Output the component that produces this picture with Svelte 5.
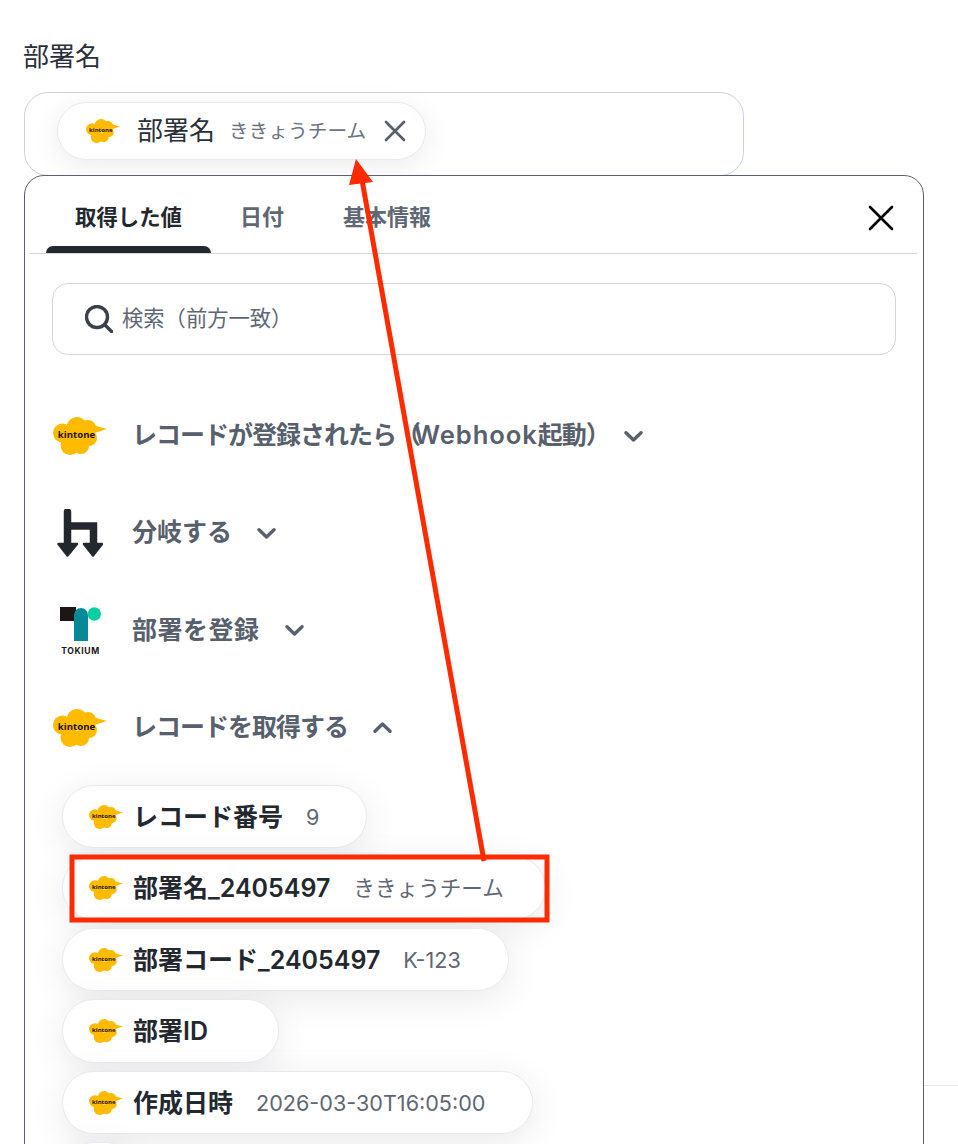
<script>
  const chips = [
    { name: 'レコード番号', value: '9', tight: false },
    { name: '部署名_2405497', value: 'ききょうチーム', tight: true },
    { name: '部署コード_2405497', value: 'K-123', tight: false },
    { name: '部署ID', value: '', tight: false },
    { name: '作成日時', value: '2026-03-30T16:05:00', tight: false },
    { name: '', value: '', tight: false }
  ];
</script>

{#snippet kintone(cls)}
  <svg class={cls} viewBox="0 0 54 38" aria-hidden="true">
    <g fill="#ffbb00">
      <circle cx="9.5" cy="16" r="9.5" />
      <circle cx="24" cy="10.5" r="10.5" />
      <circle cx="35" cy="11" r="8" />
      <circle cx="36" cy="21" r="8" />
      <circle cx="28" cy="29" r="8" />
      <circle cx="17" cy="28.5" r="9.5" />
      <path d="M38 7.5 L54 12 L40 16.5 Z" />
    </g>
    <text x="23.5" y="21" text-anchor="middle" class="ktext">kintone</text>
  </svg>
{/snippet}

{#snippet chevron(up)}
  <svg class="chev" viewBox="0 0 19 11" aria-hidden="true">
    {#if up}
      <path d="M2 9.2 L9.5 2 L17 9.2" />
    {:else}
      <path d="M2 1.8 L9.5 9 L17 1.8" />
    {/if}
  </svg>
{/snippet}

<div class="page">
  <div class="label">部署名</div>
  <div class="input">
    <div class="token">
      {@render kintone('logo-sm')}
      <span class="token-name">部署名</span>
      <span class="token-value">ききょうチーム</span>
      <svg class="token-x" viewBox="0 0 22 22" aria-hidden="true">
        <path d="M2 2 L20 20 M20 2 L2 20" />
      </svg>
    </div>
  </div>

  <div class="panel">
    <div class="tabbar">
      <div class="tab active">取得した値</div>
      <div class="tab">日付</div>
      <div class="tab third">基本情報</div>
      <svg class="close" viewBox="0 0 26 26" aria-hidden="true">
        <path d="M2 2 L24 24 M24 2 L2 24" />
      </svg>
    </div>

    <div class="body">
      <div class="search">
        <svg class="search-icon" viewBox="0 0 28 28" aria-hidden="true">
          <circle cx="12" cy="12" r="10.5" />
          <path d="M20 20 L26.5 26.5" />
        </svg>
        <span class="search-text">検索（前方一致）</span>
      </div>

      <div class="groups">
        <div class="group">
          <div class="slot">{@render kintone('logo-lg')}</div>
          <span class="group-name kana">レコードが登録されたら<span class="open">（</span><span class="latin">Webhook</span>起動<span class="close-paren">）</span></span>
          {@render chevron(false)}
        </div>
        <div class="group">
          <div class="slot">
            <svg class="branch" viewBox="0 0 46 48" aria-hidden="true">
              <path d="M10.5 34 V3 M10.5 17 H36.5 V34" />
              <path class="head" d="M1.5 35 H20 L10.5 46.5 Z M27 35 H45 L36 46.5 Z" />
            </svg>
          </div>
          <span class="group-name">分岐する</span>
          {@render chevron(false)}
        </div>
        <div class="group">
          <div class="slot">
            <svg class="tokium" viewBox="0 0 41 47" aria-hidden="true">
              <rect x="0" y="0" width="16" height="14" fill="#1c1716" />
              <path d="M14 34 V8 A7 7 0 0 1 28 8 V34 Z" fill="#078a96" />
              <circle cx="34.3" cy="7" r="6.7" fill="#07cfa0" />
              <text x="20.5" y="46.5" text-anchor="middle" class="ttext">TOKIUM</text>
            </svg>
          </div>
          <span class="group-name wide">部署を登録</span>
          {@render chevron(false)}
        </div>
        <div class="group">
          <div class="slot">{@render kintone('logo-lg')}</div>
          <span class="group-name kana">レコードを取得する</span>
          {@render chevron(true)}
        </div>
      </div>

      <div class="chips">
        {#each chips as chip}
          <div class="chip" class:tight={chip.tight}>
            {#if chip.name}
              {@render kintone('logo-sm')}
              <span class="chip-name">{chip.name}</span>
              <span class="chip-value">{chip.value}</span>
            {/if}
          </div>
        {/each}
      </div>
    </div>
  </div>

  <div class="edge-line"></div>

  <svg class="annotation" viewBox="0 0 958 1144" aria-hidden="true">
    <rect x="72" y="857" width="475" height="63" fill="none" stroke="#ff2a00" stroke-width="5" />
    <path d="M484 861 L362 180" fill="none" stroke="#ff2a00" stroke-width="5" />
    <path d="M356 159 L349 185 L373 182 Z" fill="#ff2a00" />
  </svg>
</div>

<style>
  :global(body) {
    margin: 0;
    background: #fff;
  }

  .page {
    position: relative;
    width: 958px;
    height: 1144px;
    overflow: hidden;
    box-sizing: border-box;
    padding: 40px 34px 0 24px;
    font-family: Inter, "Noto Sans CJK JP", sans-serif;
    color: #2a3038;
  }

  .label {
    font-size: 26px;
    line-height: 34px;
    font-weight: 400;
    margin-bottom: 18px;
    margin-left: -1px;
  }

  .input {
    box-sizing: border-box;
    width: 720px;
    height: 84px;
    border: 1px solid #ccd2dd;
    border-radius: 24px;
    padding: 9px 32px;
    margin-bottom: -1px;
  }

  .token {
    display: inline-flex;
    align-items: center;
    box-sizing: border-box;
    height: 58px;
    padding: 0 19px 0 28px;
    border: 1px solid #e8eaf2;
    border-radius: 29px;
    background: #fff;
    box-shadow: 0 6px 28px rgba(0, 0, 0, 0.08);
  }

  .token-name {
    font-size: 26px;
    margin-left: 17px;
    line-height: 34px;
  }

  .token-value {
    font-size: 19.7px;
    color: #6b7480;
    margin-left: 14px;
    line-height: 30px;
  }

  .token-x {
    width: 22px;
    height: 22px;
    margin-left: 18px;
    fill: none;
    stroke: #56606c;
    stroke-width: 2.6;
    stroke-linecap: round;
  }

  .panel {
    position: relative;
    box-sizing: border-box;
    width: 900px;
    height: 1100px;
    border: 1px solid #5a6270;
    border-radius: 20px;
    background: #fff;
  }

  .tabbar {
    position: relative;
    display: flex;
    box-sizing: border-box;
    height: 78px;
    margin: 0 6px 0 5px;
    padding-left: 16px;
    border-bottom: 1px solid #d3d6de;
  }

  .tab {
    padding: 0 29px;
    height: 77px;
    line-height: 82px;
    font-size: 22px;
    font-weight: 600;
    color: #5e6773;
    box-sizing: border-box;
  }

  .tab.third {
    margin-left: 1px;
  }

  .tab.active {
    color: #23282f;
    font-size: 21.4px;
    font-weight: 700;
    position: relative;
  }

  .tab.active::after {
    content: "";
    position: absolute;
    left: 0;
    right: 0;
    bottom: 0;
    height: 7px;
    border-radius: 7px 7px 0 0;
    background: #23282f;
  }

  .close {
    position: absolute;
    right: 23px;
    top: 29px;
    width: 26px;
    height: 26px;
    fill: none;
    stroke: #000;
    stroke-width: 2.6;
    stroke-linecap: round;
  }

  .body {
    padding: 29px 27px 0;
  }

  .search {
    display: flex;
    align-items: center;
    box-sizing: border-box;
    height: 72px;
    border: 1px solid #d3d6de;
    border-radius: 16px;
    padding-left: 32px;
    font-size: 21.3px;
    color: #5e6773;
  }

  .search-text {
    line-height: 30px;
    margin-top: -3px;
  }

  .search-icon {
    width: 28px;
    height: 28px;
    margin-right: 9px;
    fill: none;
    stroke: #3a414b;
    stroke-width: 3.4;
    stroke-linecap: round;
  }

  .groups {
    margin-top: 51px;
    display: flex;
    flex-direction: column;
    gap: 37.3px;
  }

  .group {
    display: flex;
    align-items: center;
    height: 60px;
  }

  .slot {
    width: 56px;
    height: 60px;
    margin-right: 24px;
    display: flex;
    align-items: center;
    justify-content: center;
  }

  .group-name {
    font-size: 25px;
    font-weight: 600;
    color: #57606c;
    line-height: 34px;
    margin-top: -2px;
    white-space: nowrap;
  }

  .group-name.kana {
    letter-spacing: -1px;
  }

  .group-name.wide {
    letter-spacing: 0.5px;
  }

  .open {
    letter-spacing: -7px;
  }

  .latin {
    font-size: 25.6px;
    letter-spacing: 0.9px;
  }

  .close-paren {
    letter-spacing: -12px;
  }

  .chev {
    width: 19px;
    height: 11px;
    margin-left: 25px;
    fill: none;
    stroke: #57606c;
    stroke-width: 3.4;
    stroke-linecap: round;
    stroke-linejoin: round;
  }

  .logo-lg {
    width: 54px;
    height: 38px;
  }

  .logo-sm {
    width: 34px;
    height: 24px;
    flex: none;
  }

  .ktext {
    font-family: "Open Sans", sans-serif;
    font-weight: 700;
    font-size: 9.6px;
    fill: #1c1400;
  }

  .branch {
    width: 46px;
    height: 48px;
  }

  .branch path {
    fill: none;
    stroke: #23282f;
    stroke-width: 7.5;
    stroke-linecap: round;
    stroke-linejoin: miter;
  }

  .branch path.head {
    fill: #23282f;
    stroke-width: 2.5;
    stroke-linejoin: round;
  }

  .tokium {
    width: 41px;
    height: 47px;
  }

  .ttext {
    font-family: Inter, sans-serif;
    font-weight: 700;
    font-size: 8.6px;
    letter-spacing: 0.6px;
    fill: #1c1716;
  }

  .chips {
    margin: 27px 0 0 10px;
    display: flex;
    flex-direction: column;
    align-items: flex-start;
    gap: 8px;
  }

  .chip {
    display: flex;
    align-items: center;
    box-sizing: border-box;
    height: 63.5px;
    padding: 0 47px 0 26px;
    border: 1px solid #e8eaf2;
    border-radius: 32px;
    background: #fff;
    box-shadow: 0 8px 36px rgba(0, 0, 0, 0.09);
  }

  .chip.tight {
    padding-right: 41px;
  }

  .chip-name {
    margin-left: 10px;
    font-size: 25px;
    font-weight: 600;
    line-height: 34px;
    color: #23282f;
  }

  .chip-value {
    margin-left: 23px;
    font-size: 21.6px;
    line-height: 30px;
    color: #5e6773;
  }

  .edge-line {
    position: absolute;
    left: 925px;
    right: 0;
    top: 1085px;
    height: 1px;
    background: #e4e4e4;
  }

  .annotation {
    position: absolute;
    left: 0;
    top: 0;
    width: 958px;
    height: 1144px;
    pointer-events: none;
  }
</style>
